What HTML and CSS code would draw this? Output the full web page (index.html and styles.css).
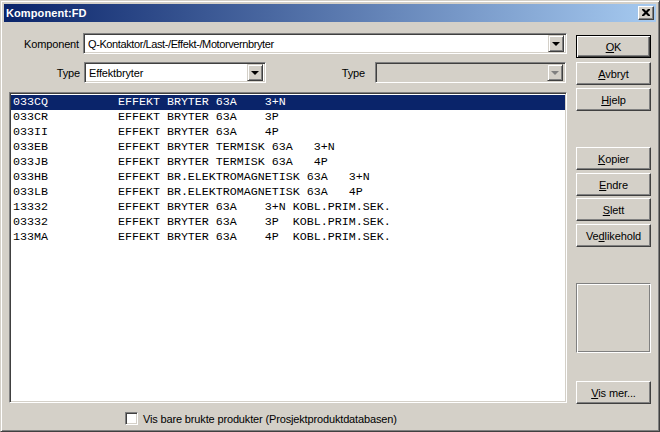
FILE: index.html
```html
<!DOCTYPE html>
<html>
<head>
<meta charset="utf-8">
<link rel="stylesheet" href="styles.css">
</head>
<body>
<div class="window">
  <div class="titlebar">
    <span class="title">Komponent:FD</span>
    <span class="close"><svg width="8" height="7" viewBox="0 0 8 7"><path d="M0 0h2l2 2 2-2h2v1l-2.5 2.5L8 6v1H6L4 5 2 7H0V6l2.5-2.5L0 1z" fill="#000"/></svg></span>
  </div>
  <div class="body">
    <div class="main">
      <div class="row r1">
        <span class="lbl l1">Komponent</span>
        <div class="combo c1"><span class="ctext">Q-Kontaktor/Last-/Effekt-/Motorvernbryter</span><span class="dd"><i class="tri"></i></span></div>
      </div>
      <div class="row r2">
        <span class="lbl l2">Type</span>
        <div class="combo c2"><span class="ctext">Effektbryter</span><span class="dd"><i class="tri"></i></span></div>
        <span class="lbl l3">Type</span>
        <div class="combo c3 disabled"><span class="ctext"></span><span class="dd"><i class="tri"></i></span></div>
      </div>
      <div class="listbox">
        <div class="item sel">033CQ          EFFEKT BRYTER 63A    3+N</div>
        <div class="item">033CR          EFFEKT BRYTER 63A    3P</div>
        <div class="item">033II          EFFEKT BRYTER 63A    4P</div>
        <div class="item">033EB          EFFEKT BRYTER TERMISK 63A   3+N</div>
        <div class="item">033JB          EFFEKT BRYTER TERMISK 63A   4P</div>
        <div class="item">033HB          EFFEKT BR.ELEKTROMAGNETISK 63A   3+N</div>
        <div class="item">033LB          EFFEKT BR.ELEKTROMAGNETISK 63A   4P</div>
        <div class="item">13332          EFFEKT BRYTER 63A    3+N KOBL.PRIM.SEK.</div>
        <div class="item">03332          EFFEKT BRYTER 63A    3P  KOBL.PRIM.SEK.</div>
        <div class="item">133MA          EFFEKT BRYTER 63A    4P  KOBL.PRIM.SEK.</div>
      </div>
      <div class="checkrow">
        <span class="check"></span>
        <span class="clabel">Vis bare brukte produkter (Prosjektproduktdatabasen)</span>
      </div>
    </div>
    <div class="side">
      <div class="btn default b-ok"><span><u>O</u>K</span></div>
      <div class="btn b-avbryt"><span><u>A</u>vbryt</span></div>
      <div class="btn b-hjelp"><span><u>H</u>jelp</span></div>
      <div class="btn b-kopier"><span><u>K</u>opier</span></div>
      <div class="btn b-endre"><span><u>E</u>ndre</span></div>
      <div class="btn b-slett"><span><u>S</u>lett</span></div>
      <div class="btn b-vedl"><span>Ve<u>d</u>likehold</span></div>
      <div class="panel"></div>
      <div class="btn b-vis"><span><u>V</u>is mer...</span></div>
    </div>
  </div>
</div>
</body>
</html>
```
FILE: styles.css
```css
* { box-sizing: border-box; }
html, body { margin: 0; padding: 0; background: #d4d0c8; }
body { font-family: "Liberation Sans", Arial, sans-serif; font-size: 11px; color: #000; }

.window {
  width: 660px; height: 432px;
  background: #d4d0c8;
  border: 1px solid; border-color: #d4d0c8 #404040 #404040 #d4d0c8;
  box-shadow: inset 1px 1px 0 #fff, inset -1px -1px 0 #808080;
  padding: 3px;
  display: flex; flex-direction: column;
}
.titlebar {
  height: 18px;
  background: linear-gradient(to right, #0a246a, #a6caf0);
  display: flex; align-items: center; justify-content: space-between;
  padding: 0 2px 0 2px;
}
.title { color: #fff; font-weight: bold; font-size: 11px; letter-spacing: 0.1px; }
.close {
  width: 16px; height: 14px; background: #d4d0c8;
  border: 1px solid; border-color: #fff #404040 #404040 #fff;
  box-shadow: inset -1px -1px 0 #808080;
  display: flex; align-items: center; justify-content: center;
  padding: 0 1px 1px 0;
}
.body { display: flex; flex: 1; padding: 11px 5px 0 5px; gap: 9px; }
.main { width: 558px; display: flex; flex-direction: column; }
.row { display: flex; align-items: center; height: 21px; }
.r2 { margin-top: 8px; }
.lbl { text-align: right; letter-spacing: -0.15px; }
.l1 { width: 70px; margin-right: 4px; }
.l2 { width: 71px; margin-right: 4px; }
.l3 { margin-left: auto; margin-right: 10px; }

.combo {
  height: 21px; background: #fff;
  border: 1px solid; border-color: #808080 #fff #fff #808080;
  box-shadow: inset 1px 1px 0 #404040, inset -1px -1px 0 #d4d0c8;
  display: flex; align-items: center; padding: 2px;
}
.c1 { flex: 1; }
.c1 .ctext { letter-spacing: -0.4px; }
.c2 { width: 182px; }
.c2 .ctext { letter-spacing: -0.15px; }
.c3 { width: 191px; margin-right: 1px; }
.combo.disabled { background: #d4d0c8; }
.ctext { flex: 1; padding-left: 2px; white-space: nowrap; }
.dd {
  width: 16px; height: 17px; background: #d4d0c8;
  border: 1px solid; border-color: #d4d0c8 #404040 #404040 #d4d0c8;
  box-shadow: inset 1px 1px 0 #fff, inset -1px -1px 0 #808080;
  display: flex; align-items: center; justify-content: center;
}
.tri { width: 0; height: 0; border-left: 4px solid transparent; border-right: 4px solid transparent; border-top: 4px solid #000; margin-top: 1px; }
.disabled .tri { border-top-color: #808080; }

.listbox {
  margin-top: 9px;
  height: 311px; background: #fff;
  border: 1px solid; border-color: #808080 #fff #fff #808080;
  box-shadow: inset 1px 1px 0 #404040, inset -1px -1px 0 #d4d0c8;
  padding: 2px 1px;
}
.item {
  height: 15px; line-height: 15px;
  font-family: "Liberation Mono", "Courier New", monospace; font-size: 11.67px;
  white-space: pre; padding-left: 2px; color: #000;
}
.item.sel { background: #0a246a; color: #fff; }

.checkrow { display: flex; align-items: center; margin-top: 9px; padding-left: 116px; height: 13px; }
.check {
  width: 13px; height: 13px; background: #fff;
  border: 1px solid; border-color: #808080 #fff #fff #808080;
  box-shadow: inset 1px 1px 0 #404040, inset -1px -1px 0 #d4d0c8;
}
.clabel { margin-left: 5px; letter-spacing: -0.15px; }

.side { width: 75px; display: flex; flex-direction: column; }
.btn {
  height: 23px; background: #d4d0c8;
  border: 1px solid; border-color: #fff #404040 #404040 #fff;
  box-shadow: inset -1px -1px 0 #808080;
  display: flex; align-items: center; justify-content: center;
  letter-spacing: -0.1px;
}
.btn u { text-decoration: underline; text-underline-offset: 1px; }
.btn.default { border-color: #000; box-shadow: inset 1px 1px 0 #fff, inset -1px -1px 0 #404040, inset -2px -2px 0 #808080; }
.b-ok { margin-top: 2px; }
.b-avbryt { margin-top: 4px; }
.b-hjelp { margin-top: 3px; }
.b-kopier { margin-top: 36px; }
.b-endre { margin-top: 3px; }
.b-slett { margin-top: 2px; }
.b-vedl { margin-top: 3px; }
.panel {
  margin-top: 36px; height: 70px;
  border: 1px solid; border-color: #808080 #fff #fff #808080;
  box-shadow: inset 1px 1px 0 #fff, inset -1px -1px 0 #808080;
}
.b-vis { margin-top: 28px; }
```
